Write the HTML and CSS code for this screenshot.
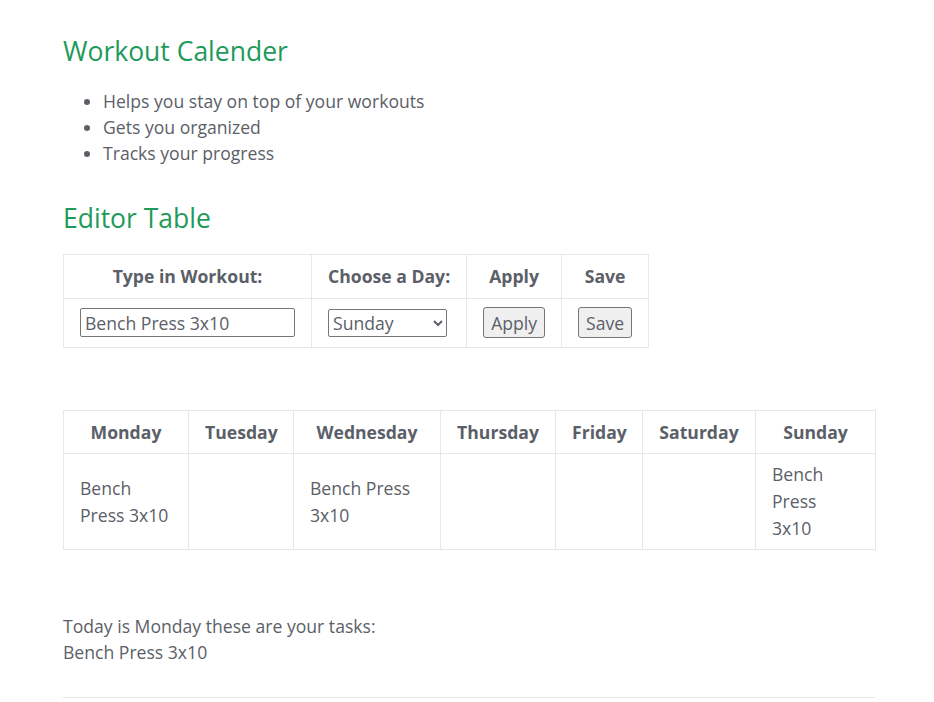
FILE: index.html
```html
<!DOCTYPE html>
<html lang="en">
<head>
<meta charset="utf-8">
<title>Workout Calender</title>
<link rel="stylesheet" href="styles.css">
</head>
<body>
<main class="page">
  <h2 class="title">Workout Calender</h2>
  <ul class="features">
    <li>Helps you stay on top of your workouts</li>
    <li>Gets you organized</li>
    <li>Tracks your progress</li>
  </ul>
  <h2 class="title editor-title">Editor Table</h2>
  <table class="tbl editor">
    <tr>
      <th>Type in Workout:</th>
      <th>Choose a Day:</th>
      <th>Apply</th>
      <th>Save</th>
    </tr>
    <tr>
      <td><input class="field" type="text" value="Bench Press 3x10"></td>
      <td>
        <select class="day">
          <option>Monday</option>
          <option>Tuesday</option>
          <option>Wednesday</option>
          <option>Thursday</option>
          <option>Friday</option>
          <option>Saturday</option>
          <option selected>Sunday</option>
        </select>
      </td>
      <td class="center"><button class="btn">Apply</button></td>
      <td class="center"><button class="btn">Save</button></td>
    </tr>
  </table>

  <table class="tbl week">
    <tr>
      <th>Monday</th>
      <th>Tuesday</th>
      <th>Wednesday</th>
      <th>Thursday</th>
      <th>Friday</th>
      <th>Saturday</th>
      <th>Sunday</th>
    </tr>
    <tr>
      <td>Bench Press 3x10</td>
      <td></td>
      <td>Bench Press 3x10</td>
      <td></td>
      <td></td>
      <td></td>
      <td>Bench Press 3x10</td>
    </tr>
  </table>

  <p class="today">Today is Monday these are your tasks:<br>Bench Press 3x10</p>
  <hr class="rule">
</main>
</body>
</html>
```

FILE: styles.css
```css
html, body {
  margin: 0;
  padding: 0;
  background: #ffffff;
}
body {
  font-family: "Open Sans", "Liberation Sans", sans-serif;
  font-size: 17.6px;
  line-height: 26px;
  color: #5b6068;
}
.page {
  width: 812px;
  margin: 0 0 0 63px;
  padding-top: 34px;
}
.title {
  font-size: 26.5px;
  font-weight: 400;
  line-height: 34px;
  color: #1e9a5b;
  margin: 0;
}
.features {
  margin: 20px 0 0 0;
  padding-left: 40px;
}
.editor-title {
  margin-top: 35px;
}
.tbl {
  border-collapse: collapse;
  border: 1px solid #e8e8e8;
}
.tbl th, .tbl td {
  border: 1px solid #e8e8e8;
  padding: 8px 16px;
  line-height: 27px;
  vertical-align: middle;
}
.tbl th {
  font-weight: 700;
  text-align: center;
}
.editor {
  margin-top: 19px;
}
.editor td {
  padding-top: 8px;
  padding-bottom: 9px;
}
.center {
  text-align: center;
}
.field {
  box-sizing: border-box;
  width: 215px;
  height: 29px;
  padding: 0 4px;
  font-family: inherit;
  font-size: 17.6px;
  color: #5b6068;
  border: 1px solid #767676;
  border-radius: 2px;
  vertical-align: middle;
}
.day {
  box-sizing: border-box;
  width: 119px;
  height: 28px;
  font-family: inherit;
  font-size: 17.6px;
  color: #5b6068;
  border: 1px solid #767676;
  border-radius: 2px;
  background: #fff;
  vertical-align: middle;
}
.btn {
  box-sizing: border-box;
  height: 31px;
  padding: 0 7px;
  font-family: inherit;
  font-size: 17.6px;
  color: #5b6068;
  background: #efefef;
  border: 1px solid #767676;
  border-radius: 3px;
  vertical-align: middle;
}
.week {
  width: 812px;
  margin-top: 62px;
  table-layout: fixed;
}
.week th, .week td {
  box-sizing: border-box;
  padding-left: 16px;
  padding-right: 16px;
}
.week th {
  padding-top: 7.5px;
  padding-bottom: 7.5px;
}
.week td {
  padding-top: 7px;
  padding-bottom: 7px;
}
.week th:nth-child(1) { width: 125px; }
.week th:nth-child(2) { width: 105px; }
.week th:nth-child(3) { width: 147px; }
.week th:nth-child(4) { width: 115px; }
.week th:nth-child(5) { width: 87px; }
.week th:nth-child(6) { width: 113px; }
.week th:nth-child(7) { width: 120px; }
.today {
  margin: 63px 0 0 0;
}
.rule {
  margin: 32px 0 0 0;
  border: 0;
  border-top: 1px solid #e8e8e8;
  height: 0;
}
```
